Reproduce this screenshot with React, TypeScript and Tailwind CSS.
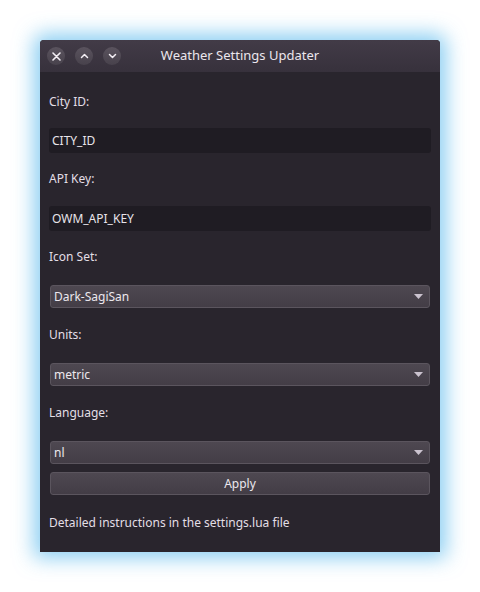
import { ReactNode } from 'react';

function TitleButton({ children }: { children: ReactNode }) {
  return (
    <div className="flex h-[18px] w-[18px] items-center justify-center rounded-full bg-gradient-to-b from-[#5a535e] to-[#48424c]">
      {children}
    </div>
  );
}

function Label({ text }: { text: string }) {
  return <div className="flex h-5 items-center px-[9px] text-[12px] text-[#e3dfe6]">{text}</div>;
}

function TextField({ value }: { value: string }) {
  return (
    <div className="mx-[9px] flex h-[25px] items-center rounded-[3px] bg-[#1f1c23] px-[3px] text-[12px] text-[#e8e4ea]">
      {value}
    </div>
  );
}

function Combo({ value }: { value: string }) {
  return (
    <div className="mx-[10px] flex h-[23px] items-center justify-between rounded-[3px] border border-[#5b555e] bg-gradient-to-b from-[#4e4851] to-[#433d46] pl-[3px] pr-[6px] text-[12px] text-[#ece8ee]">
      <span>{value}</span>
      <svg width="9" height="5" viewBox="0 0 9 5">
        <polygon points="0,0 9,0 4.5,5" fill="#cbc3cf" />
      </svg>
    </div>
  );
}

export default function App() {
  return (
    <div
      className="flex h-[592px] w-[480px] items-start justify-center bg-white pt-10"
      style={{ fontFamily: '"Noto Sans", "Open Sans", sans-serif' }}
    >
      <div className="flex h-[512px] w-[400px] flex-col rounded-t-[4px] bg-[#29252d] shadow-[0_0_20px_6px_rgba(61,174,233,0.6)]">
        <div className="relative flex h-8 items-center rounded-t-[4px] bg-gradient-to-b from-[#423b47] to-[#37313c] px-[7px]">
          <div className="flex items-center gap-[10px]">
            <TitleButton>
              <svg width="9" height="9" viewBox="0 0 9 9">
                <path d="M1 1 L8 8 M8 1 L1 8" stroke="#f3eef4" strokeWidth="1.6" strokeLinecap="round" />
              </svg>
            </TitleButton>
            <TitleButton>
              <svg width="9" height="6" viewBox="0 0 9 6">
                <path d="M1.5 4.5 L4.5 1.5 L7.5 4.5" stroke="#f3eef4" strokeWidth="1.5" fill="none" strokeLinecap="round" strokeLinejoin="round" />
              </svg>
            </TitleButton>
            <TitleButton>
              <svg width="9" height="6" viewBox="0 0 9 6">
                <path d="M1.5 1.5 L4.5 4.5 L7.5 1.5" stroke="#f3eef4" strokeWidth="1.5" fill="none" strokeLinecap="round" strokeLinejoin="round" />
              </svg>
            </TitleButton>
          </div>
          <div className="pointer-events-none absolute inset-0 flex items-center justify-center text-[13px] text-[#ebe6ed]">
            Weather Settings Updater
          </div>
        </div>

        <div className="flex flex-col pt-5">
          <Label text="City ID:" />
          <div className="h-4" />
          <TextField value="CITY_ID" />
          <div className="h-4" />
          <Label text="API Key:" />
          <div className="h-[17px]" />
          <TextField value="OWM_API_KEY" />
          <div className="h-4" />
          <Label text="Icon Set:" />
          <div className="h-[18px]" />
          <Combo value="Dark-SagiSan" />
          <div className="h-[17px]" />
          <Label text="Units:" />
          <div className="h-[18px]" />
          <Combo value="metric" />
          <div className="h-[17px]" />
          <Label text="Language:" />
          <div className="h-[18px]" />
          <Combo value="nl" />
          <div className="h-[8px]" />
          <div className="mx-[10px] flex h-[23px] items-center justify-center rounded-[3px] border border-[#5b555e] bg-gradient-to-b from-[#4e4851] to-[#433d46] text-[12px] text-[#ece8ee]">
            Apply
          </div>
          <div className="h-[18px]" />
          <Label text="Detailed instructions in the settings.lua file" />
        </div>
      </div>
    </div>
  );
}
